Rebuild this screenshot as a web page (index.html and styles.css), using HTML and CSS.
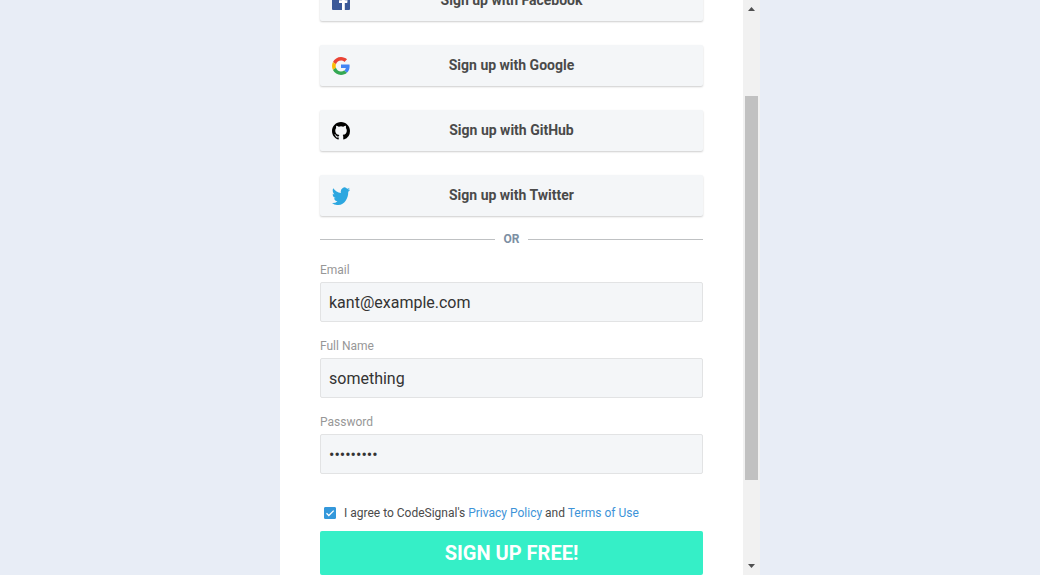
FILE: index.html
```html
<!DOCTYPE html>
<html lang="en">
<head>
<meta charset="utf-8">
<meta name="viewport" content="width=device-width, initial-scale=1">
<title>Sign up</title>
<link rel="stylesheet" href="styles.css">
</head>
<body>
<main class="modal">
  <form class="signup">
    <div class="providers">
      <button class="provider" type="button">
        <svg class="provider-icon" viewBox="0 0 18 18" aria-hidden="true"><rect width="18" height="18" rx="1" fill="#3b5998"/><path fill="#fff" d="M10 18v-7H7V8.300h3V6.200c0-2.400 1.500-3.700 3.600-3.700l2.100.1V5h-1.500c-1.100 0-1.400.6-1.400 1.400v1.900h2.800l-.4 2.700h-2.400v7z"/></svg>
        <span>Sign up with Facebook</span>
      </button>
      <button class="provider" type="button">
        <svg class="provider-icon" viewBox="0 0 48 48" aria-hidden="true"><path fill="#ea4335" d="M24 9.500c3.540 0 6.710 1.220 9.210 3.600l6.850-6.850C35.900 2.380 30.470 0 24 0 14.620 0 6.510 5.380 2.560 13.220l7.980 6.190C12.430 13.720 17.740 9.500 24 9.500z"/><path fill="#4285f4" d="M46.980 24.550c0-1.570-.15-3.090-.38-4.550H24v9.020h12.940c-.58 2.960-2.260 5.480-4.780 7.180l7.730 6c4.510-4.180 7.090-10.360 7.090-17.650z"/><path fill="#fbbc05" d="M10.530 28.590A14.500 14.500 0 0 1 9.770 24c0-1.600.27-3.140.76-4.590l-7.980-6.190A23.900 23.900 0 0 0 0 24c0 3.880.92 7.540 2.560 10.780z"/><path fill="#34a853" d="M24 48c6.480 0 11.930-2.130 15.890-5.810l-7.730-6c-2.150 1.450-4.920 2.300-8.160 2.300-6.260 0-11.570-4.220-13.470-9.910l-7.980 6.190C6.510 42.620 14.620 48 24 48z"/></svg>
        <span>Sign up with Google</span>
      </button>
      <button class="provider" type="button">
        <svg class="provider-icon" viewBox="0 0 16 16" aria-hidden="true"><path fill="#000" d="M8 0C3.580 0 0 3.580 0 8c0 3.540 2.290 6.530 5.470 7.590.4.070.55-.17.55-.38 0-.19-.01-.82-.01-1.490-2.010.37-2.530-.49-2.690-.94-.09-.23-.48-.94-.82-1.130-.28-.15-.68-.52-.01-.53.63-.01 1.080.58 1.230.82.720 1.210 1.870.87 2.330.66.070-.52.28-.87.51-1.070-1.780-.2-3.640-.89-3.640-3.950 0-.87.31-1.590.82-2.150-.08-.2-.36-1.020.08-2.120 0 0 .67-.21 2.200.82a7.600 7.600 0 0 1 4 0c1.530-1.040 2.200-.82 2.200-.82.44 1.100.16 1.920.08 2.120.51.560.82 1.270.82 2.150 0 3.070-1.870 3.750-3.650 3.950.29.25.54.73.54 1.480 0 1.070-.01 1.930-.01 2.200 0 .21.15.46.55.38A8.010 8.010 0 0 0 16 8c0-4.420-3.580-8-8-8z"/></svg>
        <span>Sign up with GitHub</span>
      </button>
      <button class="provider" type="button">
        <svg class="provider-icon" viewBox="1 1 22 22" preserveAspectRatio="none" aria-hidden="true"><path fill="#2ca7e0" d="M23.950 4.570a10 10 0 0 1-2.820.77 4.960 4.960 0 0 0 2.160-2.720c-.95.550-2 .950-3.130 1.180a4.920 4.920 0 0 0-8.380 4.480C7.690 8.090 4.070 6.130 1.640 3.160a4.820 4.820 0 0 0-.67 2.480c0 1.710.87 3.210 2.190 4.100a4.900 4.900 0 0 1-2.230-.62v.06a4.920 4.920 0 0 0 3.950 4.830 5 5 0 0 1-2.210.08 4.940 4.940 0 0 0 4.600 3.420A9.870 9.870 0 0 1 0 19.540a13.990 13.990 0 0 0 7.550 2.210c9.050 0 14-7.500 14-13.980 0-.21 0-.42-.02-.63a9.940 9.940 0 0 0 2.460-2.550z" transform="matrix(.92 0 0 1.100 1 -.9)"/></svg>
        <span>Sign up with Twitter</span>
      </button>
    </div>
    <div class="divider">OR</div>
    <div class="fields">
      <div class="field">
        <label for="email">Email</label>
        <input id="email" type="email" value="kant@example.com">
      </div>
      <div class="field">
        <label for="name">Full Name</label>
        <input id="name" type="text" value="something">
      </div>
      <div class="field">
        <label for="password">Password</label>
        <input id="password" type="password" value="something">
      </div>
    </div>
    <div class="agree">
      <span class="check">
        <input id="agree" type="checkbox" checked>
        <svg viewBox="0 0 12 12" aria-hidden="true"><path d="M2.500 6.200 4.800 8.500 9.700 3.600" fill="none" stroke="#fff" stroke-width="1.300"/></svg>
      </span>
      <label for="agree">I agree to CodeSignal's <a href="#privacy">Privacy Policy</a> and <a href="#terms">Terms of Use</a></label>
    </div>
    <button class="submit" type="submit">SIGN UP FREE!</button>
  </form>
  <div class="scrollbar" aria-hidden="true">
    <svg class="arrow" viewBox="0 0 17 17"><path fill="#505050" d="M5 11h7L8.500 7z"/></svg>
    <div class="track"><div class="thumb"></div></div>
    <svg class="arrow" viewBox="0 0 17 17"><path fill="#505050" d="M5 6h7L8.500 10z"/></svg>
  </div>
</main>
</body>
</html>
```
FILE: styles.css
```css
* {
  box-sizing: border-box;
}

body {
  margin: 0;
  background: #e8edf6;
  color: #4a4a4a;
  font-family: Roboto, "Liberation Sans", sans-serif;
}

button,
input {
  font-family: inherit;
}

.modal {
  display: flex;
  max-width: 480px;
  height: 100vh;
  margin: 0 auto;
  overflow: hidden;
  background: #fff;
}

.signup {
  display: flex;
  flex: 1;
  flex-direction: column;
  justify-content: flex-end;
  min-width: 0;
  padding: 0 40px;
}

.providers {
  display: grid;
  gap: 24px;
}

.provider {
  display: grid;
  grid-template-columns: 18px 1fr 18px;
  align-items: center;
  height: 41px;
  padding: 1px 12px 0;
  border: 0;
  border-radius: 2px;
  background: #f4f6f8;
  box-shadow: 0 1px 2px rgba(0, 0, 0, 0.2);
  color: #4a4a4a;
  font-size: 14px;
  font-weight: 700;
  line-height: 20px;
}

.provider span {
  padding-bottom: 2px;
}

.provider-icon {
  display: block;
  width: 18px;
  height: 18px;
}

.divider {
  display: flex;
  align-items: center;
  gap: 9px;
  margin: 15px 0;
  color: #7c8fa3;
  font-size: 12px;
  font-weight: 700;
  line-height: 16px;
}

.divider::before,
.divider::after {
  flex: 1;
  height: 1px;
  background: #bfc1c3;
  content: "";
}

.fields {
  display: grid;
  gap: 16px;
}

.field {
  display: grid;
  gap: 4px;
}

.field label {
  color: #979797;
  font-size: 12px;
  line-height: 16px;
}

.field input {
  width: 100%;
  height: 40px;
  padding: 0 8px;
  border: 1px solid #e2e3e4;
  border-radius: 2px;
  background: #f4f6f8;
  color: #333;
  font-size: 16px;
}

.agree {
  display: flex;
  align-items: center;
  gap: 8px;
  margin: 31px 0 10px;
  padding-left: 4px;
  font-size: 12px;
  line-height: 16px;
}

.agree a {
  color: #3d93d8;
  text-decoration: none;
}

.check {
  display: grid;
  width: 12px;
  height: 12px;
}

.check input,
.check svg {
  grid-area: 1 / 1;
  width: 12px;
  height: 12px;
  margin: 0;
}

.check input {
  appearance: none;
  border: 1px solid #3498db;
  border-radius: 1px;
}

.check input:checked {
  background: #3498db;
}

.check svg {
  pointer-events: none;
}

.submit {
  height: 44px;
  border: 0;
  border-radius: 2px;
  background: #35efc7;
  color: #fff;
  font-size: 20px;
  font-weight: 700;
}

.provider,
.submit,
.divider,
.agree,
.providers,
.fields {
  flex-shrink: 0;
}

.scrollbar {
  display: flex;
  flex-direction: column;
  width: 17px;
  background: #f1f1f1;
}

.arrow {
  width: 17px;
  height: 17px;
}

.track {
  display: flex;
  flex: 1;
  flex-direction: column;
  padding: 0 2px;
}

.track::before {
  flex: 79;
  content: "";
}

.track::after {
  flex: 78;
  content: "";
}

.thumb {
  flex: 384;
  background: #c1c1c1;
}
```
